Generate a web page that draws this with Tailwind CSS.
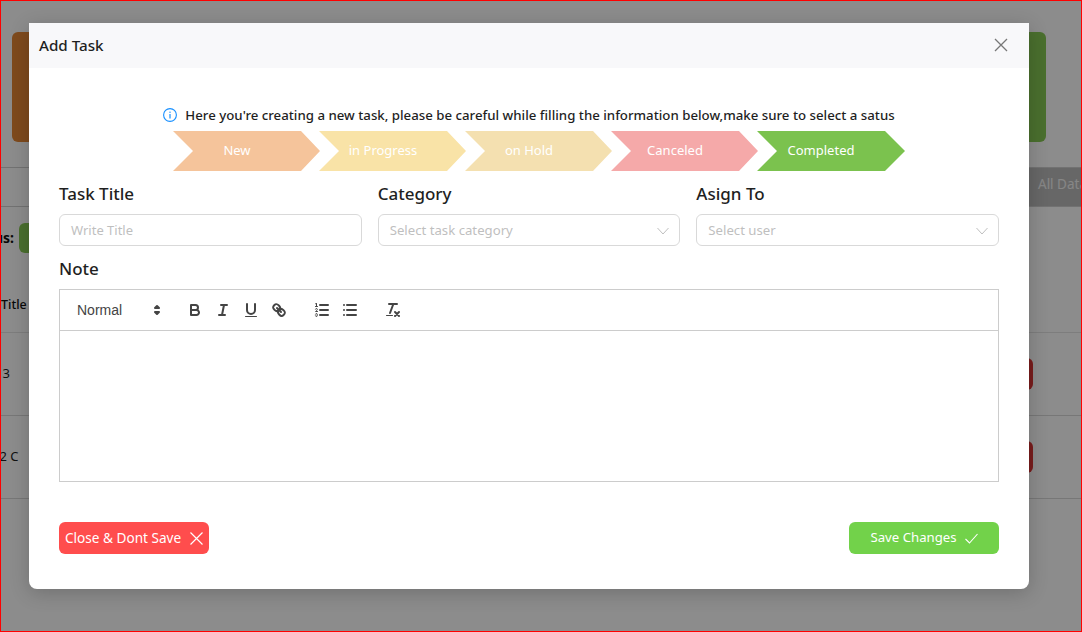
<!DOCTYPE html>
<html>
<head>
<meta charset="utf-8">
<script src="https://cdn.jsdelivr.net/npm/@tailwindcss/browser@4"></script>
</head>
<body class="m-0 overflow-hidden bg-white">
<div class="relative w-[1082px] h-[632px] overflow-hidden border border-[#ff0000] font-['Noto_Sans',sans-serif] text-[#1f1f1f]">
  <!-- page behind the dialog -->
  <div class="flex flex-col h-full bg-white">
    <div class="flex gap-4 px-[11px] pt-[31px] h-[143px]">
      <div class="flex-1 h-[110px] rounded-md bg-[#e58736]"></div>
      <div class="flex-1 h-[110px] rounded-md mr-[24px] bg-[#88ca54]"></div>
    </div>
    <div class="flex justify-end h-[40px] mt-[23px] border-y border-[#d0d0d0]">
      <div class="flex items-center w-[52px] pl-[9px] pb-[6px] overflow-hidden whitespace-nowrap text-[13.500px] text-[#f5f5f5] bg-[#bcbcbc]">All Data</div>
    </div>
    <div class="flex items-center h-[30px] mt-[16px] -ml-6 gap-[5px] overflow-hidden">
      <span class="text-sm font-bold text-[#111] w-[37px] text-right">us:</span>
      <div class="w-[60px] h-[30px] rounded-md bg-[#88ca54]"></div>
    </div>
    <div class="flex items-center h-[80px] pt-[26px] border-b border-[#e4e4e4] text-[12.500px] font-medium text-[#111]">Title</div>
    <div class="flex items-center justify-between h-[83px] border-b border-[#d9d9d9] text-[13px]">
      <span class="-ml-[6px]">13</span>
      <div class="w-[60px] h-[32px] mr-[48px] rounded-md bg-[#dd3434]"></div>
    </div>
    <div class="flex items-center justify-between h-[83px] border-b border-[#d9d9d9] text-[13px]">
      <span class="-ml-[9px]">12 C</span>
      <div class="w-[60px] h-[32px] mr-[48px] rounded-md bg-[#dd3434]"></div>
    </div>
  </div>
  <!-- overlay -->
  <div class="absolute inset-0 bg-black/45"></div>
  <!-- dialog -->
  <div class="absolute left-[28px] top-[22px] w-[1000px] h-[566px] bg-white rounded-b-lg shadow-[0_4px_20px_rgba(0,0,0,0.2)]">
    <div class="flex items-center justify-between h-[45px] pl-[10px] pr-[21px] bg-[#f8f8fa]">
      <span class="text-[15.200px] font-medium">Add Task</span>
      <svg width="14" height="14" viewBox="0 0 14 14" fill="none" stroke="#777" stroke-width="1.3" class="-mt-[1px]"><path d="M1 1l12 12M13 1L1 13"/></svg>
    </div>
    <div class="flex flex-col px-[30px]">
      <div class="flex items-center justify-center gap-2 h-[20px] mt-[37px]">
        <svg width="14" height="14" viewBox="0 0 14 14" fill="none"><circle cx="7" cy="7" r="6.4" stroke="#1890ff" stroke-width="1.1"/><rect x="6.400" y="6" width="1.200" height="4.500" fill="#1890ff"/><rect x="6.400" y="3.600" width="1.200" height="1.300" fill="#1890ff"/></svg>
        <span class="pt-[1px] text-[13.250px] font-medium whitespace-nowrap">Here you're creating a new task, please be careful while filling the information below,make sure to select a satus</span>
      </div>
      <div class="flex mt-[6px] ml-[114px] text-[13px] text-white">
        <div class="flex items-center justify-center w-[148px] h-[40px] pr-[20px] bg-[#f5c49b] [clip-path:polygon(0_0,128px_0,147px_50%,128px_100%,0_100%,20px_50%)]">New</div>
        <div class="flex items-center justify-center w-[148px] h-[40px] -ml-[2px] pr-[20px] bg-[#f9e3a7] [clip-path:polygon(0_0,128px_0,147px_50%,128px_100%,0_100%,20px_50%)]">in Progress</div>
        <div class="flex items-center justify-center w-[148px] h-[40px] -ml-[2px] pr-[20px] bg-[#f4e0b0] [clip-path:polygon(0_0,128px_0,147px_50%,128px_100%,0_100%,20px_50%)]">on Hold</div>
        <div class="flex items-center justify-center w-[148px] h-[40px] -ml-[2px] pr-[20px] bg-[#f5a9a9] [clip-path:polygon(0_0,128px_0,147px_50%,128px_100%,0_100%,20px_50%)]">Canceled</div>
        <div class="flex items-center justify-center w-[148px] h-[40px] -ml-[2px] pr-[20px] bg-[#7bc24e] [clip-path:polygon(0_0,128px_0,100%_50%,128px_100%,0_100%,20px_50%)]">Completed</div>
      </div>
      <div class="grid grid-cols-3 gap-x-[16px] mt-[11px]">
        <div>
          <div class="text-[17px] leading-[24px] font-medium mb-[8px]">Task Title</div>
          <div class="flex items-center h-[32px] px-[11px] pt-[1px] border border-[#d9d9d9] rounded-md text-[13px] text-[#bfbfbf]">Write Title</div>
        </div>
        <div>
          <div class="text-[17px] leading-[24px] font-medium mb-[8px]">Category</div>
          <div class="flex items-center justify-between h-[32px] pl-[11px] pr-[10px] pt-[1px] border border-[#d9d9d9] rounded-md text-[13.200px] text-[#bfbfbf]">
            <span>Select task category</span>
            <svg width="12" height="8" viewBox="0 0 12 8" fill="none" stroke="#bfbfbf" stroke-width="1"><path d="M.5 1L6 7l5.500-6"/></svg>
          </div>
        </div>
        <div>
          <div class="text-[17px] leading-[24px] font-medium mb-[8px]">Asign To</div>
          <div class="flex items-center justify-between h-[32px] pl-[11px] pr-[10px] pt-[1px] border border-[#d9d9d9] rounded-md text-[13.200px] text-[#bfbfbf]">
            <span>Select user</span>
            <svg width="12" height="8" viewBox="0 0 12 8" fill="none" stroke="#bfbfbf" stroke-width="1"><path d="M.5 1L6 7l5.500-6"/></svg>
          </div>
        </div>
      </div>
      <div class="text-[17px] leading-[24px] font-medium mt-[11px] mb-[8px]">Note</div>
      <div class="flex flex-col h-[193px] border border-[#cccccc]">
        <div class="flex items-center h-[41px] pl-[8px] border-b border-[#cccccc] text-[#444]">
          <div class="flex items-center justify-between w-[98px] h-[24px] pl-[9px] font-['Liberation_Sans',sans-serif] text-sm">
            <span>Normal</span>
            <svg width="18" height="18" viewBox="0 0 18 18" fill="#444" stroke="#444" stroke-width="2" stroke-linejoin="round"><polygon points="7 11 9 13 11 11 7 11"/><polygon points="7 7 9 5 11 7 7 7"/></svg>
          </div>
          <div class="flex items-center ml-[15px]">
            <div class="w-[28px] h-[24px] px-[5px] py-[3px]"><svg width="18" height="18" viewBox="0 0 18 18" fill="none" stroke="#444" stroke-width="2" stroke-linecap="round" stroke-linejoin="round"><path d="M5,4H9.5A2.5,2.5,0,0,1,12,6.500v0A2.500,2.500,0,0,1,9.500,9H5A0,0,0,0,1,5,9V4A0,0,0,0,1,5,4Z"/><path d="M5,9h5.500A2.500,2.500,0,0,1,13,11.500v0A2.500,2.500,0,0,1,10.500,14H5a0,0,0,0,1,0,0V9A0,0,0,0,1,5,9Z"/></svg></div>
            <div class="w-[28px] h-[24px] px-[5px] py-[3px]"><svg width="18" height="18" viewBox="0 0 18 18" fill="none" stroke="#444" stroke-width="2" stroke-linecap="round"><path d="M7 4h6M5 14h6M8 14l2-10"/></svg></div>
            <div class="w-[28px] h-[24px] px-[5px] py-[3px]"><svg width="18" height="18" viewBox="0 0 18 18" fill="none" stroke="#444" stroke-width="2" stroke-linecap="round"><path d="M5,3V9a4.012,4.012,0,0,0,4,4H9a4.012,4.012,0,0,0,4-4V3"/><rect x="3" y="15" width="12" height="1" rx=".5" fill="#444" stroke="none"/></svg></div>
            <div class="w-[28px] h-[24px] px-[5px] py-[3px]"><svg width="18" height="18" viewBox="0 0 18 18" fill="none" stroke="#444" stroke-width="2" stroke-linecap="round"><path d="M7 7l4 4"/><path d="M8.900,4.577a3.476,3.476,0,0,1,.36,4.679A3.476,3.476,0,0,1,4.577,8.900C3.185,7.500,2.035,6.400,4.217,4.217S7.500,3.185,8.900,4.577Z"/><path d="M13.423,9.100a3.476,3.476,0,0,0-4.679-.36,3.476,3.476,0,0,0,.36,4.679c1.392,1.392,2.500,2.542,4.679.36S14.815,10.500,13.423,9.100Z"/></svg></div>
          </div>
          <div class="flex items-center ml-[15px]">
            <div class="w-[28px] h-[24px] px-[5px] py-[3px]"><svg width="18" height="18" viewBox="0 0 18 18" fill="none" stroke="#444" stroke-linecap="round" stroke-linejoin="round"><path stroke-width="2" d="M7 4h8M7 9h8M7 14h8"/><path d="M2.500 5.500h2M4.500 10.500h-2c0-.234 1.850-1.076 1.850-2.234A.959.959 0 0 0 2.500 8.156M2.500 14.846a.959.959 0 0 0 1.850-.109A.7.7 0 0 0 3.750 14a.688.688 0 0 0 .6-.736.959.959 0 0 0-1.850-.109"/><path fill="#444" stroke="none" d="M3.500,6A.5.5,0,0,1,3,5.500V3.085l-.276.138A.5.5,0,0,1,2.053,3c-.124-.247-.023-.324.224-.447l1-.5A.5.5,0,0,1,4,2.500v3A.5.5,0,0,1,3.500,6Z"/></svg></div>
            <div class="w-[28px] h-[24px] px-[5px] py-[3px]"><svg width="18" height="18" viewBox="0 0 18 18" fill="none" stroke="#444" stroke-width="2" stroke-linecap="round"><path d="M6 4h9M6 9h9M6 14h9M3 4h0M3 9h0M3 14h0"/></svg></div>
          </div>
          <div class="ml-[15px] w-[28px] h-[24px] px-[5px] py-[3px]"><svg width="18" height="18" viewBox="0 0 18 18" fill="none" stroke="#444" stroke-width="2" stroke-linecap="round"><path d="M5 3h8M6 12L9.350 3M11 11l4 4M15 11l-4 4"/><rect x="2" y="14" width="7" height="1" rx=".5" fill="#444" stroke="none"/></svg></div>
        </div>
        <div class="flex-1"></div>
      </div>
      <div class="flex justify-between mt-[40px]">
        <div class="flex items-center justify-between w-[150px] h-[32px] pl-[6px] pr-[6px] rounded-md bg-[#ff4d4d] text-white text-[13.600px]">
          <span class="whitespace-nowrap">Close &amp; Dont Save</span>
          <svg width="13" height="13" viewBox="0 0 13 13" fill="none" stroke="#fff" stroke-width="1.200"><path d="M.5.5l12 12M12.500.5l-12 12"/></svg>
        </div>
        <div class="flex items-center justify-center gap-[8px] w-[150px] h-[32px] rounded-md bg-[#72d24a] text-white text-[13.200px]">
          <span class="whitespace-nowrap">Save Changes</span>
          <svg width="13" height="11" viewBox="0 0 13 11" fill="none" stroke="#fff" stroke-width="1.100"><path d="M.5 6l4 4L12.500 1"/></svg>
        </div>
      </div>
    </div>
  </div>
</div>
</body>
</html>
